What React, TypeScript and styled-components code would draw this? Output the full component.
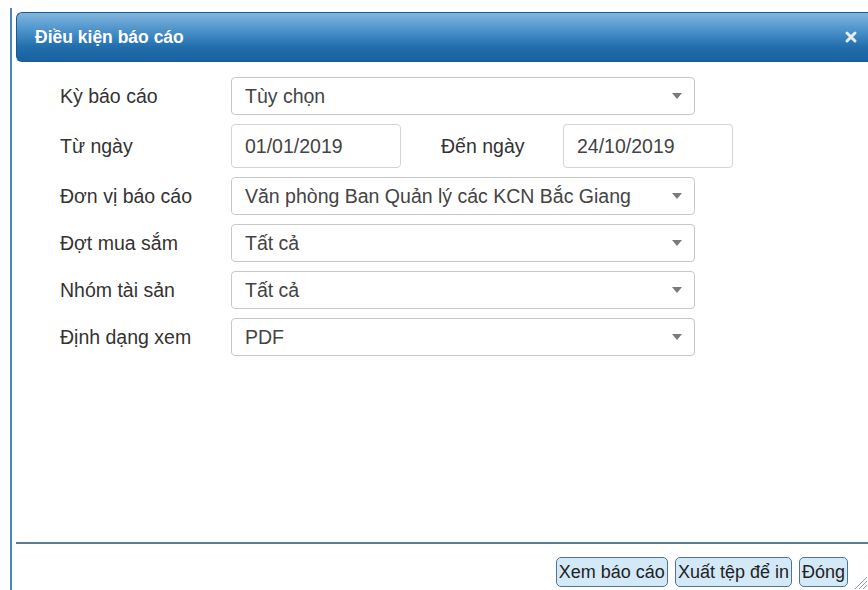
import React from 'react'
import styled, { createGlobalStyle } from 'styled-components'

const GlobalStyle = createGlobalStyle`
  html, body {
    margin: 0;
    padding: 0;
    background: #ffffff;
  }
  body {
    font-family: "Liberation Sans", Arial, sans-serif;
    overflow: hidden;
  }
`

const Page = styled.div`
  height: 590px;
  padding: 8px 0 0 10px;
  box-sizing: border-box;
  overflow: hidden;
`

const Dialog = styled.div`
  position: relative;
  width: 858px;
  height: 100%;
  box-sizing: border-box;
  border-left: 2px solid #4b87ba;
  padding: 4px 0 0 4px;
  display: flex;
  flex-direction: column;
  background: #fff;
`

const TitleBar = styled.div`
  height: 50px;
  box-sizing: border-box;
  display: flex;
  align-items: center;
  justify-content: space-between;
  padding: 0 10px 0 18px;
  border: 1px solid #1b5a90;
  border-right: none;
  border-radius: 6px 0 0 6px;
  background: linear-gradient(#80b6dd 0%, #4e93cb 35%, #226fae 70%, #17619f 100%);
  color: #fff;
`

const Title = styled.div`
  font-size: 17.5px;
  font-weight: bold;
`

const CloseButton = styled.button`
  border: none;
  background: none;
  padding: 0;
  width: 14px;
  height: 14px;
  display: flex;
  cursor: pointer;
`

const Body = styled.div`
  flex: 1;
  padding: 15px 0 0 44px;
`

const Form = styled.div`
  display: grid;
  grid-template-columns: 171px 464px;
  row-gap: 9px;
  align-items: center;
`

const Label = styled.div`
  font-size: 19.5px;
  color: #333;
`

const Select = styled.div`
  height: 38px;
  box-sizing: border-box;
  border: 1px solid #c8c8c8;
  border-radius: 4px;
  display: flex;
  align-items: center;
  justify-content: space-between;
  padding: 0 12px 0 13px;
  font-size: 19.5px;
  color: #444;
`

const Caret = styled.span`
  width: 0;
  height: 0;
  border-left: 5px solid transparent;
  border-right: 5px solid transparent;
  border-top: 6px solid #7a7a7a;
`

const DateRow = styled.div`
  display: flex;
  align-items: center;
  width: 502px;
`

const DateInput = styled.div`
  width: 170px;
  height: 44px;
  box-sizing: border-box;
  border: 1px solid #d4d4d4;
  border-radius: 4px;
  display: flex;
  align-items: center;
  padding-left: 13px;
  font-size: 19.5px;
  color: #444;
`

const InlineLabel = styled(Label)`
  width: 122px;
  padding-left: 40px;
  box-sizing: content-box;
`

const Footer = styled.div`
  height: 48px;
  box-sizing: border-box;
  border-top: 2px solid #587c98;
  display: flex;
  justify-content: flex-end;
  align-items: flex-start;
  gap: 7px;
  padding: 13px 20px 0 0;
`

const Button = styled.button`
  height: 30px;
  box-sizing: border-box;
  padding: 0 2px;
  border: 1.5px solid #4d7592;
  border-radius: 5px;
  background: #d3e9f8;
  font-family: "Liberation Sans", Arial, sans-serif;
  font-size: 18px;
  color: #222;
  cursor: pointer;
`

const Grip = styled.svg`
  position: absolute;
  right: 0;
  bottom: 0;
`

const rows = [
  { label: 'Đơn vị báo cáo', value: 'Văn phòng Ban Quản lý các KCN Bắc Giang' },
  { label: 'Đợt mua sắm', value: 'Tất cả' },
  { label: 'Nhóm tài sản', value: 'Tất cả' },
  { label: 'Định dạng xem', value: 'PDF' },
]

export default function App() {
  return (
    <Page>
      <GlobalStyle />
      <Dialog>
        <TitleBar>
          <Title>Điều kiện báo cáo</Title>
          <CloseButton aria-label="Đóng">
            <svg width="14" height="14" viewBox="0 0 14 14">
              <path d="M3 3 L11 11 M11 3 L3 11" stroke="#e6edf4" strokeWidth="3" strokeLinecap="round" />
            </svg>
          </CloseButton>
        </TitleBar>

        <Body>
          <Form>
            <Label>Kỳ báo cáo</Label>
            <Select>
              Tùy chọn
              <Caret />
            </Select>

            <Label>Từ ngày</Label>
            <DateRow>
              <DateInput>01/01/2019</DateInput>
              <InlineLabel>Đến ngày</InlineLabel>
              <DateInput>24/10/2019</DateInput>
            </DateRow>

            {rows.map((r) => (
              <React.Fragment key={r.label}>
                <Label>{r.label}</Label>
                <Select>
                  {r.value}
                  <Caret />
                </Select>
              </React.Fragment>
            ))}
          </Form>
        </Body>

        <Footer>
          <Button>Xem báo cáo</Button>
          <Button>Xuất tệp để in</Button>
          <Button>Đóng</Button>
        </Footer>

        <Grip width="14" height="18" viewBox="0 0 14 18">
          <path d="M1 17 L13 5 M5 17 L13 9 M9 17 L13 13" stroke="#8a9aa8" strokeWidth="1" />
        </Grip>
      </Dialog>
    </Page>
  )
}
